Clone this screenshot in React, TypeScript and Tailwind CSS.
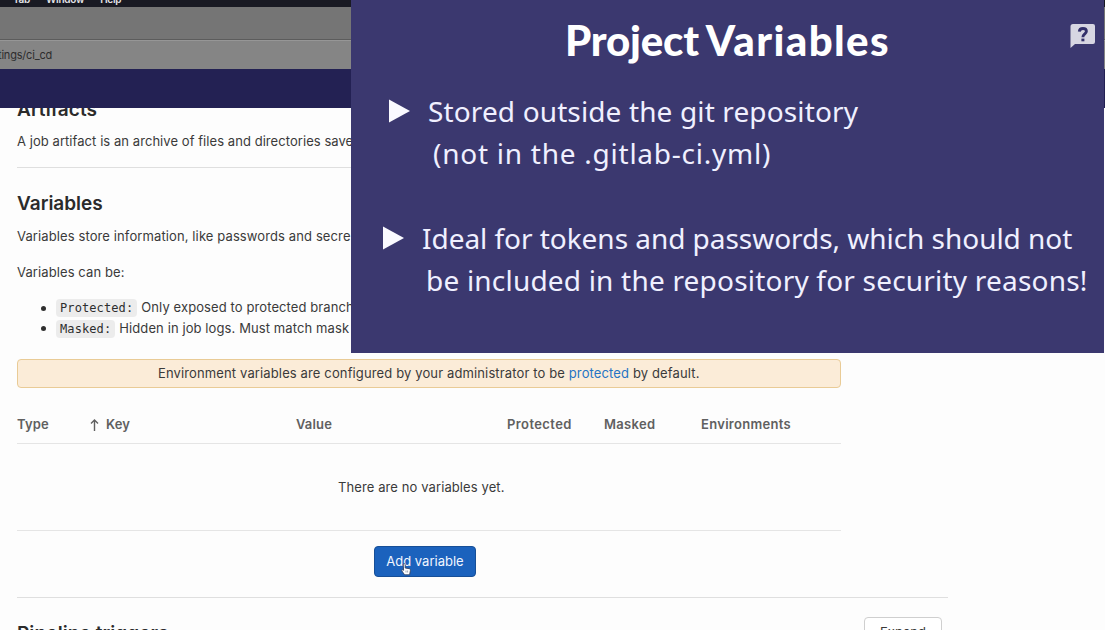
import React from "react";

function Code({ children }: { children: React.ReactNode }) {
  return (
    <code className="flex h-[18px] items-center rounded bg-[#ececec] pl-[4px] pr-[4px] font-['DejaVu_Sans_Mono',monospace] text-[12px] tracking-[0.1px] text-[#2e2e2e]">
      {children}
    </code>
  );
}

function HelpIcon() {
  return (
    <svg className="absolute left-[719px] top-[24px] h-[25px] w-[26px]" viewBox="0 0 26 25">
      <path d="M3 0H23Q25 0 25 2V18Q25 20 23 20H5L0.5 24V2.5Q0.500 0 3 0Z" fill="#d7d6e2" />
      <path d="M9.300 7.600Q9.600 4.500 12.900 4.500Q16.400 4.500 16.400 7.300Q16.400 8.900 14.500 10.200Q12.900 11.400 12.900 13.300" fill="none" stroke="#33306b" strokeWidth="2.900" />
      <rect x="11.400" y="14.600" width="3" height="2.700" fill="#33306b" />
    </svg>
  );
}

function Triangle() {
  return (
    <svg className="h-[24px] w-[21px] shrink-0" viewBox="0 0 21 24">
      <path d="M0 0.500L21 12L0 23.500Z" fill="#fafaff" />
    </svg>
  );
}

function Slide() {
  return (
    <aside className="absolute left-[351px] top-0 h-[353px] w-[753px] overflow-hidden whitespace-nowrap bg-[#3b386f] font-['Noto_Sans',sans-serif] text-[28px] leading-[42px] text-[#f0f0ff]">
      <h1 className="ml-[214px] mt-[15px] h-[50px] font-['Lato',sans-serif] text-[42px] font-black leading-[50px] text-white">
        <span className="tracking-[-0.2px] [word-spacing:-3px]">Project </span>
        <span className="tracking-[1.4px]">Variables</span>
      </h1>
      <HelpIcon />
      <div className="ml-[38px] mt-[25px] flex h-[42px]">
        <div className="mr-[18px] mt-[9px] flex"><Triangle /></div>
        <span className="tracking-[0.13px]">Stored outside the git repository</span>
      </div>
      <p className="ml-[82px] tracking-[0.75px]">(not in the .gitlab-ci.yml)</p>
      <div className="ml-[32px] mt-[43px] flex h-[42px]">
        <div className="mr-[18px] mt-[9px] flex"><Triangle /></div>
        <span className="tracking-[-0.04px]">Ideal for tokens and passwords, which should not</span>
      </div>
      <p className="ml-[75px] tracking-[0.2px]">be included in the repository for security reasons!</p>
    </aside>
  );
}

function HandCursor() {
  return (
    <svg className="absolute left-[26px] top-[16px] h-[13px] w-[10px]" viewBox="0 0 10 13">
      <path d="M2.200 1.200Q3.500 0 4.200 1.500V5L8.500 5.700Q9.600 6 9.400 7.500L8.600 11.800H3.600L0.600 7.600Q0.800 6.200 2.600 7.300Z" fill="#fff" stroke="#344462" strokeWidth="0.900" />
      <path d="M5 7.500V9.500M6.600 7.500V9.500" stroke="#7d8795" strokeWidth="0.700" />
    </svg>
  );
}

export default function App() {
  return (
    <div className="relative h-[630px] w-[1105px] overflow-hidden whitespace-nowrap bg-[#fdfdfd] font-['Inter',sans-serif] text-[13px] text-[#3a3a3a]">
      <header>
        <div className="flex h-[7px] items-end gap-[16px] overflow-hidden bg-[#191a23] pb-[1px] pl-[13px] text-[10px] font-semibold leading-[14px] tracking-[-0.25px] text-[#e5e5e8]">
          <span>Tab</span><span>Window</span><span>Help</span>
        </div>
        <div className="h-[33px] border-b border-[#5c5c5c] bg-[#757575]" />
        <div className="flex h-[29px] items-center border-t border-[#969696] bg-[#858585] text-[11px] tracking-[-0.2px] text-[#2d2d2d]">
          <span className="-ml-[2px]">tings/ci_cd</span>
        </div>
        <div className="h-[39px] bg-[#232153]" />
      </header>

      <main className="h-[522px] overflow-hidden pl-[17px]">
        <section className="w-[824px]">
          <h2 className="-mt-[10px] h-[24px] text-[19px] font-semibold leading-[24px] tracking-[0.08px] text-[#2b2b2b]">Artifacts</h2>
          <p className="mt-[9px] h-[37px] border-b border-[#dfdfdf] leading-[20px] tracking-[0.06px]">
            A job artifact is an archive of files and directories save
          </p>
          <h2 className="mt-[24px] h-[24px] text-[19px] font-semibold leading-[24px] text-[#2b2b2b]">Variables</h2>
          <p className="mt-[10px] leading-[20px] tracking-[0.11px]">Variables store information, like passwords and secre</p>
          <p className="mt-[16px] leading-[20px] tracking-[0.1px]">Variables can be:</p>
          <ul className="mt-[16px] tracking-[0.1px]">
            <li className="flex h-[20px] items-center gap-[5px] pl-[24px]">
              <i className="mr-[5px] h-[5px] w-[5px] rounded-full bg-[#303030]" />
              <Code>Protected:</Code>
              <span className="-ml-[1px]">Only exposed to protected branch</span>
            </li>
            <li className="flex h-[21px] items-center gap-[5px] pl-[24px]">
              <i className="mr-[5px] h-[5px] w-[5px] rounded-full bg-[#303030]" />
              <Code>Masked:</Code>
              <span className="-ml-[1px]">Hidden in job logs. Must match mask</span>
            </li>
          </ul>
          <div className="mt-[20px] flex h-[29px] items-center rounded border border-[#e9cb96] bg-[#fbecd8] pl-[140px] tracking-[0.13px]">
            <span>Environment variables are configured by your administrator to be <a className="text-[#2574c4]">protected</a> by default.</span>
          </div>
          <div className="mt-[16px] grid h-[40px] grid-cols-[73px_206px_211px_97px_97px_1fr] items-center border-b border-[#e5e5e5] pt-[2px] font-semibold tracking-[0.15px] text-[#606060]">
            <span>Type</span>
            <span className="flex items-center">
              <svg className="mr-[7px] h-[12px] w-[9px]" viewBox="0 0 9 12" fill="none" stroke="currentColor" strokeWidth="1.400">
                <path d="M4.500 12V1M1 4.500L4.500 1L8 4.500" />
              </svg>
              Key
            </span>
            <span>Value</span>
            <span className="tracking-[0.4px]">Protected</span>
            <span className="tracking-[0.3px]">Masked</span>
            <span className="tracking-[0.3px]">Environments</span>
          </div>
          <div className="flex h-[87px] items-center border-b border-[#e5e5e5] pl-[321px] pt-[1px] tracking-[0.1px]">There are no variables yet.</div>
        </section>
        <div className="flex h-[67px] w-[931px] items-center border-b border-[#dfdfdf] pl-[357px]">
          <button className="relative mb-[5px] h-[31px] w-[102px] rounded border border-[#174f97] bg-[#1b62bd] text-[#f1f6ff]">
            Add variable
            <HandCursor />
          </button>
        </div>
        <div className="flex w-[925px] items-start justify-between pt-[19px]">
          <h2 className="mt-[5px] text-[19px] font-semibold leading-[24px] tracking-[0.08px] text-[#2b2b2b]">Pipeline triggers</h2>
          <button className="h-[32px] w-[78px] rounded border border-[#cfcfcf] bg-white">Expand</button>
        </div>
      </main>
      <Slide />
    </div>
  );
}
